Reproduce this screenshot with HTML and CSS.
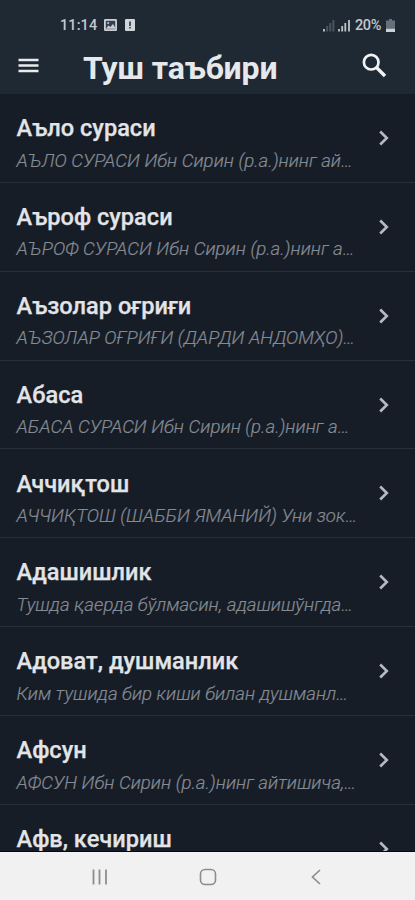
FILE: index.html
```html
<!DOCTYPE html>
<html lang="uz-Cyrl">
<head>
<meta charset="utf-8">
<title>Туш таъбири</title>
<link rel="stylesheet" href="styles.css">
</head>
<body>
<svg class="symbols" aria-hidden="true">
  <symbol id="chevron" viewBox="0 0 12 18"><path d="M2.200 2.500 8.800 9 2.200 15.500" fill="none" stroke="currentColor" stroke-width="2.600"/></symbol>
</svg>
<div class="screen">
  <header class="top">
    <div class="status">
      <span class="clock">11:14</span>
      <svg class="photo" viewBox="0 0 13 12"><rect width="13" height="12" rx="1.2" fill="#c9ced4"/><rect x="1.8" y="1.8" width="9.4" height="8.4" fill="#35404c"/><path d="M2 9.5 4.5 6.5 6.3 8 9 5l2.2 3.5v1.2H2z" fill="#c9ced4"/><circle cx="4.2" cy="4" r="1" fill="#c9ced4"/></svg>
      <svg class="alert" viewBox="0 0 10 12"><rect width="10" height="12" rx="1" fill="#d0d5da"/><path d="M5 2.4v4.6M5 8v1.5" stroke="#1f2833" stroke-width="1.5"/></svg>
      <span class="spacer"></span>
      <svg class="signal" viewBox="0 0 12 13"><path d="M1 10v2.5" stroke="#b0b7be" stroke-width="2"/><path d="M4.2 7v5.5M7.3 4v8.500M10.4 1v11.500" stroke="#4a5560" stroke-width="2"/></svg>
      <svg class="signal two" viewBox="0 0 12 13"><path d="M1 10v2.500M4.200 7v5.500M7.300 4v8.500M11 1v11.500" stroke="#bdc3c9" stroke-width="1.800"/></svg>
      <span class="percent">20%</span>
      <svg class="battery" viewBox="0 0 9 13"><path d="M3 0h3v1.500h3V13H0V1.500h3z" fill="#65707a"/><path d="M0 9.800h9V13H0z" fill="#cbd0d4"/></svg>
    </div>
    <div class="bar">
      <svg class="menu" viewBox="0 0 21 15"><path d="M.5 2h20M.5 7.500h20M.5 13h20" stroke="#e9ebed" stroke-width="2.700"/></svg>
      <h1>Туш таъбири</h1>
      <svg class="search" viewBox="0 0 25 25"><circle cx="9.200" cy="9.200" r="7.300" fill="none" stroke="#f0f2f3" stroke-width="2.700"/><path d="m14.500 14.500 8.500 8.500" stroke="#f0f2f3" stroke-width="3.300"/></svg>
    </div>
  </header>
  <main class="list">
    <article class="row"><div class="copy"><h2>Аъло сураси</h2><p>АЪЛО СУРАСИ Ибн Сирин (р.а.)нинг ай…</p></div><svg class="go"><use href="#chevron"/></svg></article>
    <article class="row"><div class="copy"><h2>Аъроф сураси</h2><p>АЪРОФ СУРАСИ Ибн Сирин (р.а.)нинг а…</p></div><svg class="go"><use href="#chevron"/></svg></article>
    <article class="row"><div class="copy"><h2>Аъзолар оғриғи</h2><p>АЪЗОЛАР ОҒРИҒИ (ДАРДИ АНДОМҲО)…</p></div><svg class="go"><use href="#chevron"/></svg></article>
    <article class="row"><div class="copy"><h2>Абаса</h2><p>АБАСА СУРАСИ Ибн Сирин (р.а.)нинг а…</p></div><svg class="go"><use href="#chevron"/></svg></article>
    <article class="row"><div class="copy"><h2>Аччиқтош</h2><p>АЧЧИҚТОШ (ШАББИ ЯМАНИЙ) Уни зок…</p></div><svg class="go"><use href="#chevron"/></svg></article>
    <article class="row"><div class="copy"><h2>Адашишлик</h2><p>Тушда қаерда бўлмасин, адашишўнгда…</p></div><svg class="go"><use href="#chevron"/></svg></article>
    <article class="row"><div class="copy"><h2>Адоват, душманлик</h2><p>Ким тушида бир киши билан душманл…</p></div><svg class="go"><use href="#chevron"/></svg></article>
    <article class="row"><div class="copy"><h2>Афсун</h2><p>АФСУН Ибн Сирин (р.а.)нинг айтишича,…</p></div><svg class="go"><use href="#chevron"/></svg></article>
    <article class="row"><div class="copy"><h2>Афв, кечириш</h2></div><svg class="go"><use href="#chevron"/></svg></article>
  </main>
  <nav class="nav">
    <svg viewBox="0 0 18 18"><path d="M2.500 1.500v15M8.500 1.500v15M15 1.500v15" stroke="#8d8d8d" stroke-width="1.800"/></svg>
    <svg viewBox="0 0 18 18"><rect x="1.500" y="1.500" width="15" height="15" rx="4.500" fill="none" stroke="#8d8d8d" stroke-width="1.600"/></svg>
    <svg viewBox="0 0 18 18"><path d="M13 2 5.500 9l7.500 7" fill="none" stroke="#8d8d8d" stroke-width="1.700"/></svg>
  </nav>
</div>
</body>
</html>
```
FILE: styles.css
```css
* { box-sizing: border-box; }
body { margin: 0; background: #161d27; font-family: Roboto, "Noto Sans", sans-serif; }
h1, h2, p { margin: 0; white-space: nowrap; }
svg { display: block; flex: none; }
.symbols { width: 0; height: 0; position: absolute; }
.screen { display: flex; flex-direction: column; width: 415px; height: 900px; overflow: hidden; }
.top { flex: none; height: 94px; background: #1f2933; }
.status { display: flex; align-items: center; height: 33px; padding: 17px 20px 0 60px; color: #c3c8ce; font-size: 14.5px; }
.clock { width: 44px; letter-spacing: .1px; font-weight: 500; }
.photo { width: 13px; height: 12px; }
.alert { width: 10px; height: 12px; margin-left: 8px; }
.spacer { flex: 1; }
.signal { width: 12px; height: 13px; }
.two { margin-left: 3px; }
.percent { width: 28px; margin: 0 3px 0 5px; letter-spacing: -.4px; font-weight: 500; }
.battery { width: 9px; height: 13px; }
.bar { display: flex; align-items: center; height: 61px; padding: 2px 28px 0 18px; }
.menu { width: 21px; height: 15px; margin-top: 2px; }
.bar h1 { flex: 1; margin-left: 44px; padding-top: 6px; color: #e6e9ec; font-size: 32px; line-height: 40px; font-weight: 700; letter-spacing: -.1px; }
.search { width: 25px; height: 25px; margin-top: 2px; }
.list { flex: 1; min-height: 0; overflow: hidden; border-bottom: 1px solid #05080d; }
.row { display: flex; align-items: flex-start; height: 88.86px; padding: 20.2px 25px 0 16.5px; border-bottom: 1.5px solid #28313b; }
.copy { flex: 1; }
.row h2 { color: #e2e4e7; font-size: 23.6px; line-height: 28px; font-weight: 500; -webkit-text-stroke: .25px #e2e4e7; }
.row p { margin-top: 6.4px; color: #858b93; font-size: 18.65px; line-height: 24px; font-weight: 300; font-style: italic; -webkit-text-stroke: .2px #858b93; }
.go { width: 12px; height: 18px; margin-top: 14.8px; color: #b6bac0; }
.nav { flex: none; display: grid; grid-template-columns: repeat(3, 108px); justify-content: center; justify-items: center; align-items: center; height: 48px; padding-top: 2px; background: #f1f1f1; }
.nav svg { width: 18px; height: 18px; }
```
